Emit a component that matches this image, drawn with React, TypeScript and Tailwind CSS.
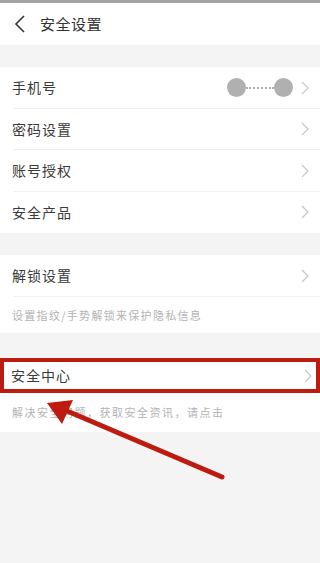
import React from 'react';

const font = { fontFamily: '"Noto Sans CJK SC", "Noto Sans", sans-serif' };

const Chevron: React.FC = () => (
    <svg width="8" height="14" viewBox="0 0 8 14" className="shrink-0">
        <path d="M1 1 L7 7 L1 13" fill="none" stroke="#c8c8c8" strokeWidth="1.2" />
    </svg>
);

const Row: React.FC<{ label: string; divider?: boolean; children?: React.ReactNode }> = ({ label, divider, children }) => (
    <div className="relative flex h-[41.5px] items-center pl-3 pr-[11px]">
        <span className="flex-1 text-[14px] text-[#3a3a3a] tracking-[1px]">{label}</span>
        {children}
        <Chevron />
        {divider && <div className="absolute bottom-0 left-[14px] right-0 h-px bg-[#efefef]" />}
    </div>
);

const PhoneMask: React.FC = () => (
    <div className="mr-[8px] flex items-center">
        <div className="h-[19px] w-[19px] rounded-full bg-[#b0b0b0]" />
        <div className="w-[28px] border-t-2 border-dotted border-[#b0b0b0]" />
        <div className="h-[19px] w-[19px] rounded-full bg-[#b0b0b0]" />
    </div>
);

export default function App() {
    return (
        <div className="relative h-[563px] w-[320px] overflow-hidden bg-[#f4f4f4]" style={font}>
            <div className="h-[3px] bg-[#a3a3a3]" />
            <div className="flex h-[42px] items-center bg-white pl-[14px]">
                <svg width="12" height="18" viewBox="0 0 12 18">
                    <path d="M10 1 L2 9 L10 17" fill="none" stroke="#333" strokeWidth="1.6" />
                </svg>
                <span className="ml-[14px] text-[15px] text-[#333] tracking-[0.5px]">安全设置</span>
            </div>

            <div className="mt-[22px] bg-white">
                <Row label="手机号" divider>
                    <PhoneMask />
                </Row>
                <Row label="密码设置" divider />
                <Row label="账号授权" divider />
                <Row label="安全产品" />
            </div>

            <div className="mt-[22px] bg-white">
                <Row label="解锁设置" divider />
                <div className="flex h-[36.5px] items-center pl-3 text-[11px] tracking-[1.3px] text-[#b3b3b3]">
                    设置指纹/手势解锁来保护隐私信息
                </div>
            </div>

            <div className="mt-[25px] bg-white">
                <div className="flex h-[35px] w-[319.5px] items-center border-[4.5px] border-[#bd1a10] pl-[7px] pr-[4px]">
                    <span className="flex-1 text-[14px] text-[#3a3a3a] tracking-[1px]">安全中心</span>
                    <Chevron />
                </div>
                <div className="flex h-[39px] items-center pl-3 text-[11px] tracking-[1.5px] text-[#b3b3b3]">
                    解决安全问题，获取安全资讯，请点击
                </div>
            </div>

            <svg className="pointer-events-none absolute left-0 top-0" width="320" height="563" viewBox="0 0 320 563">
                <line x1="222" y1="477" x2="60" y2="408" stroke="#bd1a10" strokeWidth="5" strokeLinecap="round" />
                <polygon points="47,403 73,400 62,424" fill="#bd1a10" />
            </svg>
        </div>
    );
}
